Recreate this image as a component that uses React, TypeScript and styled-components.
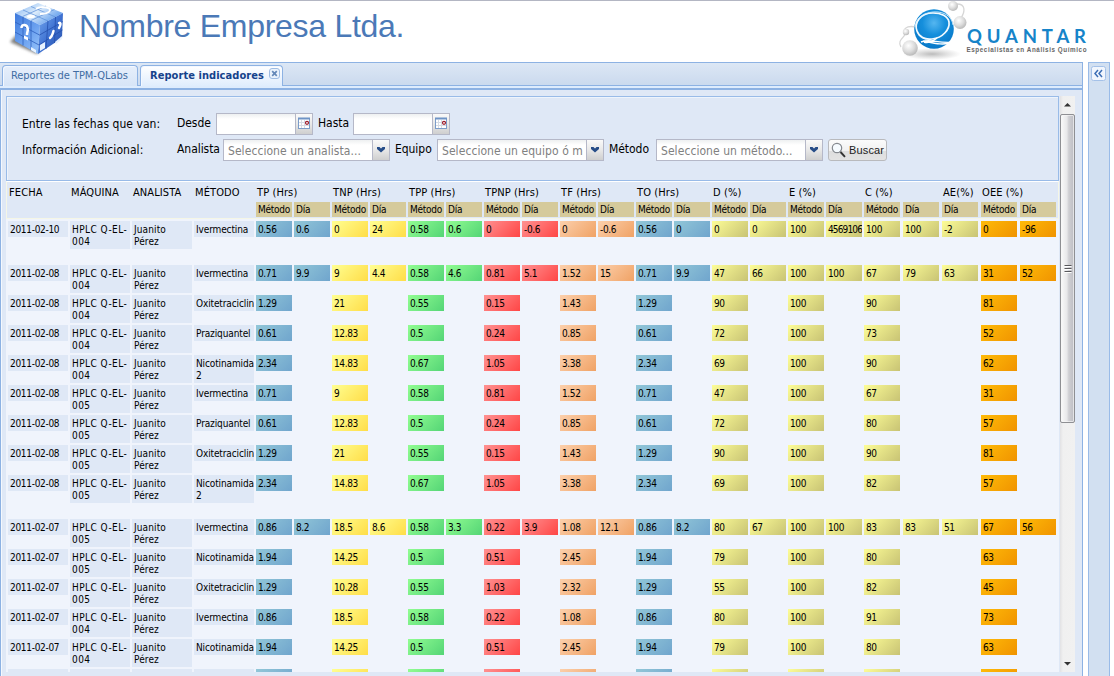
import React from 'react';
import styled, { createGlobalStyle } from 'styled-components';

const GlobalStyle = createGlobalStyle`
  * { box-sizing: border-box; }
  html, body { margin: 0; padding: 0; background: #fff; overflow: hidden; }
  body { font-family: "DejaVu Sans Condensed", "DejaVu Sans", sans-serif; color: #000; }
`;

const Page = styled.div`
  width: 1114px;
  height: 676px;
  display: flex;
  flex-direction: column;
  overflow: hidden;
  background: #fff;
`;

const Header = styled.header`
  height: 62px;
  flex: none;
  display: flex;
  align-items: flex-start;
  border-top: 1px solid #b3b6c3;
  padding: 0 22px 0 8px;
`;

const CompanyName = styled.h1`
  margin: 5px auto 0 13px;
  font: 400 32px/40px "Liberation Sans", Arial, sans-serif;
  letter-spacing: -0.28px;
  color: #4b79b7;
  white-space: nowrap;
`;

const Body = styled.div`
  flex: 1;
  min-height: 0;
  display: flex;
  gap: 5px;
`;

const Main = styled.main`
  width: 1083px;
  display: flex;
  flex-direction: column;
  border-right: 1px solid #8db2e3;
`;

const TabStrip = styled.nav`
  height: 24px;
  flex: none;
  display: flex;
  gap: 2px;
  padding: 2px 0 0 2px;
  border-top: 1px solid #8db2e3;
  border-bottom: 1px solid #8db2e3;
  background: linear-gradient(#dce7f5, #cbdaee);
`;

const Tab = styled.div<{ $active?: boolean }>`
  height: ${p => (p.$active ? 22 : 21)}px;
  width: ${p => (p.$active ? 143 : 136)}px;
  display: flex;
  align-items: flex-start;
  border: 1px solid #8db2e3;
  border-bottom: 0;
  border-radius: 4px 4px 0 0;
  padding: 3px 2px 0 ${p => (p.$active ? 9 : 8)}px;
  background: ${p => (p.$active ? 'linear-gradient(#ffffff, #deecfd)' : 'linear-gradient(#e6effb, #d7e5f7)')};
  box-shadow: inset 1px 1px 0 #f3f8ff;
  color: ${p => (p.$active ? '#15428b' : '#416da3')};
  font-size: 11px;
  line-height: 14px;
  font-weight: ${p => (p.$active ? 700 : 400)};
  letter-spacing: ${p => (p.$active ? '0.06px' : '-0.06px')};
  white-space: nowrap;
`;

const TabClose = styled.svg`
  flex: none;
  margin: -1px 0 0 auto;
`;

const TabSpacer = styled.div`
  height: 4px;
  flex: none;
  background: #deecfd;
  border-bottom: 2px solid #8db2e3;
`;

const Content = styled.section`
  flex: 1;
  min-height: 0;
  display: flex;
  border-left: 1px solid #8db2e3;
  background: #dfe8f6;
  box-shadow: inset 1px 0 0 #f4f8fe;
  padding: 6px 6px 4px 5px;
`;

const Scrolled = styled.div`
  width: 1053px;
  height: 576px;
  display: flex;
  flex-direction: column;
  overflow: hidden;
  background: #f0f4fc;
`;

const Filters = styled.form`
  height: 85px;
  flex: none;
  display: flex;
  flex-direction: column;
  gap: 4px;
  padding: 16px 0 0 15px;
  border: 1px solid #99bbe8;
  background: #dfe8f6;
  box-shadow: inset 1px 1px 0 #eef4fc;
`;

const FilterRow = styled.div`
  height: 22px;
  display: flex;
  font-size: 12px;
  line-height: 20px;
  white-space: nowrap;
`;

const FilterTitle = styled.span`
  width: 155px;
  padding-top: 1px;
  letter-spacing: 0.05px;
`;

const FieldLabel = styled.label<{ $w: number }>`
  width: ${p => p.$w}px;
  letter-spacing: -0.05px;
`;

const Field = styled.div<{ $w: number }>`
  width: ${p => p.$w}px;
  height: 22px;
  display: flex;
  margin-right: 5px;
  border: 1px solid #b5b8c8;
  background: linear-gradient(#eef0f1, #fff 5px);
`;

const FieldText = styled.span`
  flex: 1;
  min-width: 0;
  overflow: hidden;
  margin-right: 2px;
  padding-left: 4px;
  line-height: 22px;
  color: #808080;
  letter-spacing: 0.06px;
`;

const Trigger = styled.span`
  width: 17px;
  flex: none;
  display: flex;
  justify-content: center;
  border-left: 1px solid #b5b8c8;
  background: linear-gradient(#fafafa, #e8e8e8 50%, #cfcfcf);
`;

const SearchButton = styled.button`
  width: 59px;
  height: 22px;
  display: flex;
  align-items: center;
  gap: 2px;
  padding: 0 0 0 2px;
  border: 1px solid #b9babd;
  border-radius: 3px;
  background: linear-gradient(#fbfbfb, #f1f1f1 55%, #dedede 56%, #e3e3e3);
  font: 11px "Liberation Sans", Arial, sans-serif;
  letter-spacing: 0.15px;
  color: #222;
`;

const columnTracks = 'repeat(4, 62px) repeat(16, 38px) repeat(5, 39px)';

const TableHead = styled.div`
  height: 38px;
  flex: none;
  display: grid;
  grid-template-columns: ${columnTracks};
  grid-template-rows: 20px 15px;
  padding: 0 0 0 1px;
  border: 1px solid #f5f6e6;
  border-top: 1px solid #fff;
  background: #dfe8f6;
  white-space: nowrap;
`;

const GroupTitle = styled.div<{ $start: number; $span: number }>`
  grid-row: 1;
  grid-column: ${p => p.$start} / span ${p => p.$span};
  padding: 1px 0 0 1px;
  font-size: 11px;
  line-height: 20px;
  letter-spacing: 0.1px;
`;

const SubTitle = styled.div<{ $start: number }>`
  grid-row: 2;
  grid-column: ${p => p.$start};
  width: 36px;
  padding-left: 2px;
  overflow: hidden;
  background: #d5ca9b;
  font-size: 10px;
  line-height: 16px;
  letter-spacing: -0.25px;
`;

const DataRow = styled.div<{ $gap?: boolean }>`
  height: 28px;
  flex: none;
  display: grid;
  grid-template-columns: ${columnTracks};
  align-items: start;
  margin: ${p => (p.$gap ? 16 : 2)}px 0 0 2px;
  font-size: 10px;
  line-height: 12px;
`;

const InfoCell = styled.div<{ $track: number }>`
  width: 60px;
  padding: 3px 0 1px 2px;
  overflow: hidden;
  background: #dfe8f6;
  letter-spacing: ${p => p.$track}px;
  white-space: nowrap;
`;

type Tone = 'blue' | 'yellow' | 'green' | 'red' | 'peach' | 'khaki' | 'amber';

const tones: Record<Tone, string> = {
  blue: '#92c7d8, #70a5cd',
  yellow: '#ffff92, #ffdd48',
  green: '#92fd92, #54d576',
  red: '#ff9292, #ff4646',
  peach: '#fcd0ac, #f0a265',
  khaki: '#fdfd97, #c8c374',
  amber: '#ffbb08, #f09300',
};

const ValueCell = styled.div<{ $tone: Tone; $col: number; $tight: boolean }>`
  grid-column: ${p => p.$col};
  grid-row: 1;
  width: 36px;
  height: 16px;
  padding: 3px 0 1px 2px;
  overflow: hidden;
  background: linear-gradient(135deg, ${p => tones[p.$tone]});
  letter-spacing: ${p => (p.$tight ? -0.85 : -0.36)}px;
  white-space: nowrap;
`;

const ScrollBar = styled.div`
  width: 15px;
  height: 576px;
  margin-left: 1px;
  display: flex;
  flex-direction: column;
  align-items: center;
  background: linear-gradient(90deg, #e2e2e4, #f0f0f0 3px, #f1f1f1);
`;

const ScrollArrow = styled.svg`
  flex: none;
`;

const Thumb = styled.div`
  width: 15px;
  height: 309px;
  display: flex;
  align-items: center;
  justify-content: center;
  border: 1px solid #8e8f93;
  border-radius: 2px;
  background: linear-gradient(90deg, #fafafa, #e8e8ea 45%, #cfcfd3 60%, #bdbdc3);
  box-shadow: inset 0 0 0 1px #f6f6f6aa;
`;

const ArrowGap = styled.div`
  flex: 1;
`;

const SidePanel = styled.aside`
  width: 22px;
  border: 1px solid #99bbe8;
  border-bottom: 0;
  background: #d2e0f1;
  display: flex;
  align-items: flex-start;
  padding: 3px 0 0 2px;
`;

const CubeLogo = () => (
  <svg width="58" height="56" viewBox="8 0 58 56">
    <defs>
      <linearGradient id="cubeTop" x1="0" y1="0" x2="1" y2="0.6">
        <stop offset="0" stopColor="#7fb2f2" /><stop offset="0.5" stopColor="#dcecfb" /><stop offset="1" stopColor="#5b9aec" />
      </linearGradient>
      <linearGradient id="cubeLeft" x1="0" y1="0" x2="0.7" y2="1">
        <stop offset="0" stopColor="#3d79dc" /><stop offset="0.6" stopColor="#6aa0ef" /><stop offset="1" stopColor="#8dbcf8" />
      </linearGradient>
      <linearGradient id="cubeRight" x1="0" y1="0" x2="1" y2="1">
        <stop offset="0" stopColor="#74a8ee" /><stop offset="0.5" stopColor="#3f72d2" /><stop offset="1" stopColor="#244ca4" />
      </linearGradient>
      <filter id="cubeShade"><feGaussianBlur stdDeviation="1.8" /></filter>
    </defs>
    <path d="M10 41 L17 33 L40 50 L37 53z" fill="#555" opacity=".75" filter="url(#cubeShade)" />
    <path d="M15 12 38 2 63 12 40 24z" fill="url(#cubeTop)" />
    <path d="M15 12 40 24 38 53 15 40z" fill="url(#cubeLeft)" />
    <path d="M40 24 63 12 62 37 38 53z" fill="url(#cubeRight)" />
    <path d="M23 9 48 20M31 5.500 55.500 16M22.500 15.500 46 5M31 19.500 54.500 8.500" stroke="#5c8fd8" strokeWidth=".7" fill="none" />
    <path d="M23 16V44.500M31 20V49M15 21 39.500 34M15 31 39 44" stroke="#2f60bd" strokeWidth=".8" fill="none" />
    <path d="M48 20 46 48M55.500 16 54.500 42M39.500 34 63 20.500M39 44 62.500 29" stroke="#2450ad" strokeWidth=".8" fill="none" />
    <path d="M36 8c3-3 14-2 14 1 0 3-6 4-10 4" fill="none" stroke="#fff" strokeWidth="1.900" />
    <ellipse cx="31" cy="15.500" rx="4" ry="1.700" fill="#fff" />
    <path d="M21.500 27c0-4.500 6-4 6.300 1 .2 3-1 3-.8 6" fill="none" stroke="#fff" strokeWidth="2.500" />
    <path d="M24 34.500l4 2v3l-4-2z" fill="#fff" />
    <path d="M59 22c2-1 2 2 0 5M53.500 30c-1 3-1 5-3.500 7" fill="none" stroke="#fff" strokeWidth="2.400" strokeLinecap="round" />
    <path d="M55 41 62 35v3l-6 5z" fill="#e8f2ff" />
    <path d="M40 44l5-3v6l-5 3zM31 46l5 3v3l-5-3z" fill="#e8f3ff" />
  </svg>
);

const QuantarLogo = () => (
  <svg width="196" height="60" viewBox="896 1 196 60">
    <defs>
      <radialGradient id="blueBall" cx=".5" cy=".35" r=".65">
        <stop offset="0" stopColor="#55b6f0" /><stop offset=".45" stopColor="#158fdc" /><stop offset="1" stopColor="#0878c8" />
      </radialGradient>
      <radialGradient id="greyBall" cx=".4" cy=".35" r=".7">
        <stop offset="0" stopColor="#fff" /><stop offset=".55" stopColor="#dcdcdc" /><stop offset="1" stopColor="#b4b4b4" />
      </radialGradient>
      <radialGradient id="ballShadow">
        <stop offset="0" stopColor="#aaa" stopOpacity=".8" /><stop offset="1" stopColor="#bbb" stopOpacity="0" />
      </radialGradient>
    </defs>
    <ellipse cx="932" cy="54" rx="29" ry="6" fill="url(#ballShadow)" />
    <path d="M916 27C905 25 903 30 905 33S896 40 901 47M957 4c9 0 8 8 4 14" fill="none" stroke="#d6d6d6" strokeWidth="1.300" />
    <circle cx="953" cy="6" r="5" fill="url(#greyBall)" />
    <circle cx="960" cy="22.500" r="6.500" fill="url(#greyBall)" />
    <circle cx="906" cy="32" r="3.200" fill="url(#greyBall)" />
    <circle cx="910" cy="48" r="7.800" fill="url(#greyBall)" />
    <circle cx="934" cy="29" r="19.800" fill="url(#blueBall)" />
    <path d="M933 13C920 13 914 23 917 31c2 6 8 9 15 8 11-1 18-10 17-17-1-6-8-9-16-9" fill="none" stroke="#f2faff" strokeWidth="1.700" />
    <path d="M915 27C916 17 926 11 938 12c9 1 14 6 15 13" fill="none" stroke="#d9effc" strokeWidth=".9" />
    <path d="M924 42c5 2 10-2 13-4M921 42c9-4 17 2 33 0-11 4-21 1-31-1" fill="none" stroke="#fff" strokeWidth="1.400" />
    <text x="967" y="42.500" textLength="119" lengthAdjust="spacing" fontFamily="Lato, sans-serif" fontWeight="700" fontSize="18.500" fill="#1684c9">QUANTAR</text>
    <text x="966.500" y="52" textLength="120" lengthAdjust="spacing" fontFamily="Liberation Sans, sans-serif" fontWeight="700" fontSize="6.300" fill="#666">Especialistas en Análisis Químico</text>
  </svg>
);

const CalendarIcon = () => (
  <svg width="14" height="20" viewBox="0 0 14 20">
    <rect x="1.500" y="4.500" width="11" height="10" fill="#fff" stroke="#7b9cc9" />
    <path d="M1 4.500h12" stroke="#6f94c6" strokeWidth="2" />
    <path d="M4.500 6v8M7.500 6v8M2 8.500h8M2 11.500h10" stroke="#d6dbe4" />
    <circle cx="10" cy="8.800" r="1.500" fill="#fff" stroke="#9c1c2a" strokeWidth="1.200" />
  </svg>
);

const ChevronIcon = () => (
  <svg width="14" height="20" viewBox="0 0 14 20">
    <path d="M3 7h2.500L7 8.500 8.500 7H11v2L7 12.500 3 9z" fill="#274d88" />
  </svg>
);

const SearchIcon = () => (
  <svg width="16" height="18" viewBox="0 0 16 18">
    <circle cx="6" cy="7" r="4.700" fill="#f6fbff" stroke="#85898f" strokeWidth="1.200" />
    <path d="M9.500 11 14 15.800" stroke="#333" strokeWidth="1.900" />
  </svg>
);

const DateField = () => (
  <Field $w={97}><FieldText /><Trigger><CalendarIcon /></Trigger></Field>
);

const Combo = ({ text }: { text: string }) => (
  <Field $w={167}><FieldText>{text}</FieldText><Trigger><ChevronIcon /></Trigger></Field>
);

const groups: [string, number, number][] = [
  ['FECHA', 1, 1], ['MÁQUINA', 2, 1], ['ANALISTA', 3, 1], ['MÉTODO', 4, 1],
  ['TP (Hrs)', 5, 2], ['TNP (Hrs)', 7, 2], ['TPP (Hrs)', 9, 2], ['TPNP (Hrs)', 11, 2],
  ['TF (Hrs)', 13, 2], ['TO (Hrs)', 15, 2], ['D (%)', 17, 2], ['E (%)', 19, 2],
  ['C (%)', 21, 2], ['AE(%)', 23, 1], ['OEE (%)', 24, 2],
];

// Column order: TP, TNP, TPP, TPNP, TF, TO, D, E, C, OEE; the AE column has daily values only.
const methodColumns = [5, 7, 9, 11, 13, 15, 17, 19, 21, 24];
const dayColumns = [6, 8, 10, 12, 14, 16, 18, 20, 22, 23, 25];
const methodTones: Tone[] = ['blue', 'yellow', 'green', 'red', 'peach', 'blue', 'khaki', 'khaki', 'khaki', 'amber'];
const dayTones: Tone[] = ['blue', 'yellow', 'green', 'red', 'peach', 'blue', 'khaki', 'khaki', 'khaki', 'khaki', 'amber'];

type Entry = { date: string; unit: string; method: string; part?: string; values: string; day?: string };

const entries: Entry[] = [
  { date: '2011-02-10', unit: '004', method: 'Ivermectina', values: '0.56 0 0.58 0 0 0.56 0 100 100 0', day: '0.6 24 0.6 -0.6 -0.6 0 0 4569106 100 -2 -96' },
  { date: '2011-02-08', unit: '004', method: 'Ivermectina', values: '0.71 9 0.58 0.81 1.52 0.71 47 100 67 31', day: '9.9 4.4 4.6 5.1 15 9.9 66 100 79 63 52' },
  { date: '2011-02-08', unit: '004', method: 'Oxitetraciclina', values: '1.29 21 0.55 0.15 1.43 1.29 90 100 90 81' },
  { date: '2011-02-08', unit: '004', method: 'Praziquantel', values: '0.61 12.83 0.5 0.24 0.85 0.61 72 100 73 52' },
  { date: '2011-02-08', unit: '004', method: 'Nicotinamida', part: '2', values: '2.34 14.83 0.67 1.05 3.38 2.34 69 100 90 62' },
  { date: '2011-02-08', unit: '005', method: 'Ivermectina', values: '0.71 9 0.58 0.81 1.52 0.71 47 100 67 31' },
  { date: '2011-02-08', unit: '005', method: 'Praziquantel', values: '0.61 12.83 0.5 0.24 0.85 0.61 72 100 80 57' },
  { date: '2011-02-08', unit: '005', method: 'Oxitetraciclina', values: '1.29 21 0.55 0.15 1.43 1.29 90 100 90 81' },
  { date: '2011-02-08', unit: '005', method: 'Nicotinamida', part: '2', values: '2.34 14.83 0.67 1.05 3.38 2.34 69 100 82 57' },
  { date: '2011-02-07', unit: '005', method: 'Ivermectina', values: '0.86 18.5 0.58 0.22 1.08 0.86 80 100 83 67', day: '8.2 8.6 3.3 3.9 12.1 8.2 67 100 83 51 56' },
  { date: '2011-02-07', unit: '005', method: 'Nicotinamida', values: '1.94 14.25 0.5 0.51 2.45 1.94 79 100 80 63' },
  { date: '2011-02-07', unit: '005', method: 'Oxitetraciclina', values: '1.29 10.28 0.55 1.03 2.32 1.29 55 100 82 45' },
  { date: '2011-02-07', unit: '004', method: 'Ivermectina', values: '0.86 18.5 0.58 0.22 1.08 0.86 80 100 91 73' },
  { date: '2011-02-07', unit: '004', method: 'Nicotinamida', values: '1.94 14.25 0.5 0.51 2.45 1.94 79 100 80 63' },
  { date: '2011-02-07', unit: '004', method: 'Oxitetraciclina', values: '1.29 10.28 0.55 1.03 2.32 1.29 55 100 82 45' },
];

const Value = ({ col, tone, text }: { col: number; tone: Tone; text: string }) => (
  <ValueCell $col={col} $tone={tone} $tight={text.length > 6}>{text}</ValueCell>
);

const IndicatorRow = ({ entry, gap }: { entry: Entry; gap: boolean }) => (
  <DataRow $gap={gap}>
    <InfoCell $track={-0.3}>{entry.date}</InfoCell>
    <InfoCell $track={0.45}>HPLC Q-EL-<br />{entry.unit}</InfoCell>
    <InfoCell $track={0.12}>Juanito<br />Pérez</InfoCell>
    <InfoCell $track={-0.12}>{entry.method}{entry.part && <><br />{entry.part}</>}</InfoCell>
    {entry.values.split(' ').map((v, i) => (
      <Value key={methodColumns[i]} col={methodColumns[i]} tone={methodTones[i]} text={v} />
    ))}
    {entry.day?.split(' ').map((v, i) => (
      <Value key={dayColumns[i]} col={dayColumns[i]} tone={dayTones[i]} text={v} />
    ))}
  </DataRow>
);

export default function App() {
  return (
    <Page>
      <GlobalStyle />
      <Header>
        <CubeLogo />
        <CompanyName>Nombre Empresa Ltda.</CompanyName>
        <QuantarLogo />
      </Header>
      <Body>
        <Main>
          <TabStrip>
            <Tab>Reportes de TPM-QLabs</Tab>
            <Tab $active>
              Reporte indicadores
              <TabClose width="11" height="11" viewBox="0 0 11 11">
                <rect x=".5" y=".5" width="10" height="10" rx="2.500" fill="#eaf2fc" stroke="#9dbbe3" />
                <path d="M3.200 3.200l4.600 4.600M7.800 3.200 3.200 7.800" stroke="#6488b8" strokeWidth="1.700" />
              </TabClose>
            </Tab>
          </TabStrip>
          <TabSpacer />
          <Content>
            <Scrolled>
              <Filters>
                <FilterRow>
                  <FilterTitle>Entre las fechas que van:</FilterTitle>
                  <FieldLabel $w={39}>Desde</FieldLabel>
                  <DateField />
                  <FieldLabel $w={35}>Hasta</FieldLabel>
                  <DateField />
                </FilterRow>
                <FilterRow>
                  <FilterTitle>Información Adicional:</FilterTitle>
                  <FieldLabel $w={46}>Analista</FieldLabel>
                  <Combo text="Seleccione un analista..." />
                  <FieldLabel $w={42}>Equipo</FieldLabel>
                  <Combo text="Seleccione un equipo ó m" />
                  <FieldLabel $w={47}>Método</FieldLabel>
                  <Combo text="Seleccione un método..." />
                  <SearchButton type="button"><SearchIcon />Buscar</SearchButton>
                </FilterRow>
              </Filters>
              <TableHead>
                {groups.map(([label, start, span]) => (
                  <GroupTitle key={label} $start={start} $span={span}>{label}</GroupTitle>
                ))}
                {methodColumns.map(c => <SubTitle key={c} $start={c}>Método</SubTitle>)}
                {dayColumns.map(c => <SubTitle key={c} $start={c}>Día</SubTitle>)}
              </TableHead>
              {entries.map((entry, i) => (
                <IndicatorRow key={i} entry={entry} gap={i > 0 && entries[i - 1].date !== entry.date} />
              ))}
            </Scrolled>
            <ScrollBar>
              <ScrollArrow width="15" height="18" viewBox="0 0 15 18"><path d="M4 10.500h7L7.500 7z" fill="#333" /></ScrollArrow>
              <Thumb>
                <svg width="8" height="10" viewBox="0 0 8 10">
                  <path d="M.5 1.500h7M.5 4.500h7M.5 7.500h7" stroke="#58585c" />
                  <path d="M.5 2.500h7M.5 5.500h7M.5 8.500h7" stroke="#fff" />
                </svg>
              </Thumb>
              <ArrowGap />
              <ScrollArrow width="15" height="18" viewBox="0 0 15 18"><path d="M4 8h7L7.500 11.500z" fill="#333" /></ScrollArrow>
            </ScrollBar>
          </Content>
        </Main>
        <SidePanel>
          <svg width="15" height="15" viewBox="0 0 15 15">
            <rect x=".5" y=".5" width="14" height="14" rx="2" fill="#f1f6fd" stroke="#a4c1e8" />
            <path d="M7 4 4 7.500 7 11M11 4 8 7.500 11 11" fill="none" stroke="#3c6eb4" strokeWidth="1.500" />
          </svg>
        </SidePanel>
      </Body>
    </Page>
  );
}
